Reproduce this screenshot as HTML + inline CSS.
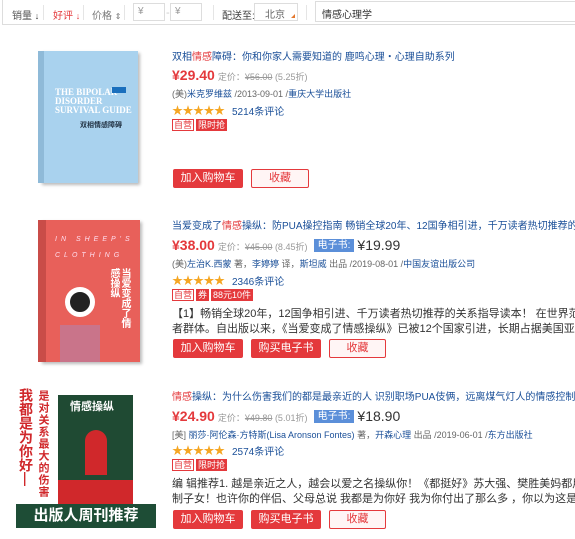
<!DOCTYPE html><html><head><meta charset="utf-8"><style>
*{margin:0;padding:0;box-sizing:border-box}
body{width:575px;height:539px;background:#fff;font-family:"Liberation Sans","Noto Sans CJK SC",sans-serif;font-size:11px;color:#333;position:relative;overflow:hidden}
.a{position:absolute;white-space:nowrap}
.bar{position:absolute;left:2px;top:0;width:580px;height:25px;border:1px solid #ddd;border-top:none;background:#fff}
.inp{position:absolute;border:1px solid #ddd;height:18px;top:3px;font-size:10px;color:#999;padding:2px 4px;overflow:hidden}
.t{color:#1a4f98;font-size:10px}
.t b{color:#e4393c;font-weight:normal}
.p{color:#e4393c;font-size:14px;font-weight:bold}
.g{color:#999;font-size:9px}
.s{text-decoration:line-through}
.au{color:#666;font-size:9px}
.au a{color:#1a4f98}
.st{color:#f5a623;font-size:11px;letter-spacing:-0.5px}
.rv{color:#1a4f98;font-size:10px}
.tg{display:inline-block;font-size:9px;height:12px;line-height:10px;padding:0 1px;margin-right:2px;border:1px solid #e4393c;color:#e4393c;vertical-align:top}
.tr{background:#e4393c;color:#fff}
.eb{display:inline-block;background:#5b8fd9;color:#fff;font-size:10px;padding:0 4px;height:13px;line-height:13px;font-weight:normal;vertical-align:2px}
.ep{font-size:14px;color:#333;font-weight:normal}
.btn{position:absolute;height:19px;line-height:19px;text-align:center;font-size:11px;color:#fff;background:#e4393c;border-radius:2px}
.btn2{position:absolute;height:19px;line-height:17px;text-align:center;font-size:11px;color:#e4393c;background:#fff5f5;border:1px solid #e4393c;border-radius:2px}
.d{font-size:11px;color:#333}
.ar{font-size:9px;font-weight:bold}
</style></head><body>
<div class="bar"></div>
<div class="a" style="left:12px;top:7px;color:#555;font-size:10px">销量 <span class="ar" style="color:#333">↓</span></div>
<div class="a" style="left:43px;top:5px;width:1px;height:15px;background:#e5e5e5"></div>
<div class="a" style="left:53px;top:7px;color:#e4393c;font-size:10px">好评 <span class="ar">↓</span></div>
<div class="a" style="left:83px;top:5px;width:1px;height:15px;background:#e5e5e5"></div>
<div class="a" style="left:92px;top:7px;color:#777;font-size:10px">价格 <span style="font-size:8px">⇕</span></div>
<div class="a" style="left:124px;top:5px;width:1px;height:15px;background:#e5e5e5"></div>
<div class="inp" style="left:133px;width:32px">¥</div>
<div class="a" style="left:166px;top:7px;color:#ccc">-</div>
<div class="inp" style="left:170px;width:32px">¥</div>
<div class="a" style="left:213px;top:5px;width:1px;height:15px;background:#e5e5e5"></div>
<div class="a" style="left:222px;top:7px;color:#444;font-size:10px">配送至:</div>
<div class="inp" style="left:254px;width:44px;color:#666;font-size:10px;padding-left:10px">北京<span style="position:absolute;right:2px;bottom:2px;width:0;height:0;border-left:4px solid transparent;border-bottom:4px solid #e4782e"></span></div>
<div class="a" style="left:306px;top:5px;width:1px;height:15px;background:#e5e5e5"></div>
<div class="inp" style="left:315px;width:270px;height:21px;top:1px;color:#333;font-size:10px;padding:4px 6px">情感心理学</div>

<!-- book1 cover -->
<div class="a" style="left:40px;top:51px;width:98px;height:132px;background:#a9d2ee;box-shadow:2px 2px 3px #bbb"></div>
<div class="a" style="left:38px;top:51px;width:6px;height:132px;background:#8fbad8"></div>
<div class="a" style="left:55px;top:88px;color:#fff;font-family:'Liberation Serif',serif;font-weight:bold;font-size:9px;line-height:9px">THE BIPOLAR<br>DISORDER<br>SURVIVAL GUIDE</div>
<div class="a" style="left:80px;top:120px;color:#234;font-size:7px;font-weight:bold">双相情感障碍</div>
<div class="a" style="left:112px;top:87px;width:14px;height:6px;background:#1a6fbd"></div>

<div class="a t" style="left:172px;top:48px">双相<b>情感</b>障碍：你和你家人需要知道的 鹿鸣心理・心理自助系列</div>
<div class="a" style="left:172px;top:67px"><span class="p">¥29.40</span> <span class="g">定价：<span class="s">¥56.00</span> (5.25折)</span></div>
<div class="a au" style="left:172px;top:87px">(美)<a>米克罗维兹</a> /2013-09-01 /<a>重庆大学出版社</a></div>
<div class="a st" style="left:172px;top:102px">★★★★★</div>
<div class="a rv" style="left:232px;top:103px">5214条评论</div>
<div class="a" style="left:172px;top:119px"><span class="tg">自营</span><span class="tg tr">限时抢</span></div>
<div class="btn" style="left:173px;top:169px;width:70px">加入购物车</div>
<div class="btn2" style="left:251px;top:169px;width:58px">收藏</div>

<!-- book2 cover -->
<div class="a" style="left:40px;top:220px;width:100px;height:142px;background:#e8605a;box-shadow:2px 2px 3px #bbb"></div>
<div class="a" style="left:38px;top:220px;width:8px;height:142px;background:#c94c48"></div>
<div class="a" style="left:55px;top:232px;color:#fde;font-size:7px;letter-spacing:4px;font-style:italic;line-height:16px">IN SHEEP'S<br>CLOTHING</div>
<div class="a" style="left:108px;top:268px;color:#fff;font-size:10px;font-weight:bold;line-height:11px;writing-mode:vertical-rl;height:60px;white-space:normal">当爱变成了情感操纵</div>
<div class="a" style="left:65px;top:287px;width:30px;height:30px;border-radius:50%;background:#222;border:5px solid #fff"></div>
<div class="a" style="left:60px;top:325px;width:40px;height:37px;background:#c9748a"></div>

<div class="a t" style="left:172px;top:217px">当爱变成了<b>情感</b>操纵：防PUA操控指南 畅销全球20年、12国争相引进，千万读者热切推荐的关</div>
<div class="a" style="left:172px;top:237px"><span class="p">¥38.00</span> <span class="g">定价：<span class="s">¥45.00</span> (8.45折)</span> &nbsp;<span class="eb">电子书:</span> <span class="ep">¥19.99</span></div>
<div class="a au" style="left:172px;top:257px">(美)<a>左治K.西蒙</a> 著，<a>李婷婷</a> 译，<a>斯坦威</a> 出品 /2019-08-01 /<a>中国友谊出版公司</a></div>
<div class="a st" style="left:172px;top:272px">★★★★★</div>
<div class="a rv" style="left:232px;top:273px">2346条评论</div>
<div class="a" style="left:172px;top:289px"><span class="tg">自营</span><span class="tg tr">券</span><span class="tg tr">88元10件</span></div>
<div class="a d" style="left:172px;top:305px">【1】畅销全球20年，12国争相引进、千万读者热切推荐的关系指导读本！ 在世界范围内，本</div>
<div class="a d" style="left:172px;top:320px">者群体。自出版以来，《当爱变成了情感操纵》已被12个国家引进，长期占据美国亚马逊情绪</div>
<div class="btn" style="left:173px;top:339px;width:70px">加入购物车</div>
<div class="btn" style="left:251px;top:339px;width:70px">购买电子书</div>
<div class="btn2" style="left:329px;top:339px;width:57px">收藏</div>

<!-- book3 cover -->
<div class="a" style="left:58px;top:395px;width:75px;height:110px;background:#1f4a33"></div>
<div class="a" style="left:58px;top:480px;width:75px;height:25px;background:#d0282b"></div>
<div class="a" style="left:70px;top:398px;color:#fff;font-size:11px;font-weight:bold">情感操纵</div>
<div class="a" style="left:85px;top:430px;width:22px;height:45px;border-radius:11px 11px 0 0;background:#d0282b"></div>
<div class="a" style="left:18px;top:388px;color:#d0282b;font-size:14px;font-weight:bold;line-height:16px;writing-mode:vertical-rl">我都是为你好—</div>
<div class="a" style="left:36px;top:390px;color:#d0282b;font-size:11px;font-weight:bold;line-height:13px;writing-mode:vertical-rl;letter-spacing:1px">是对关系最大的伤害</div>
<div class="a" style="left:16px;top:504px;width:140px;height:24px;background:#1e4d36;color:#fff;font-size:15px;font-weight:bold;text-align:center;line-height:24px">出版人周刊推荐</div>

<div class="a t" style="left:172px;top:388px"><b>情感</b>操纵：为什么伤害我们的都是最亲近的人 识别职场PUA伎俩，远离煤气灯人的情感控制！</div>
<div class="a" style="left:172px;top:408px"><span class="p">¥24.90</span> <span class="g">定价：<span class="s">¥49.80</span> (5.01折)</span> &nbsp;<span class="eb">电子书:</span> <span class="ep">¥18.90</span></div>
<div class="a au" style="left:172px;top:428px">[美] <a>丽莎·阿伦森·方特斯(Lisa Aronson Fontes)</a> 著，<a>开森心理</a> 出品 /2019-06-01 /<a>东方出版社</a></div>
<div class="a st" style="left:172px;top:442px">★★★★★</div>
<div class="a rv" style="left:232px;top:443px">2574条评论</div>
<div class="a" style="left:172px;top:459px"><span class="tg">自营</span><span class="tg tr">限时抢</span></div>
<div class="a d" style="left:172px;top:475px">编 辑推荐1. 越是亲近之人，越会以爱之名操纵你！《都挺好》苏大强、樊胜美妈都用看似是爱</div>
<div class="a d" style="left:172px;top:490px">制子女！也许你的伴侣、父母总说 我都是为你好 我为你付出了那么多 ，你以为这是爱，别傻</div>
<div class="btn" style="left:173px;top:510px;width:70px">加入购物车</div>
<div class="btn" style="left:251px;top:510px;width:70px">购买电子书</div>
<div class="btn2" style="left:329px;top:510px;width:57px">收藏</div>
</body></html>
